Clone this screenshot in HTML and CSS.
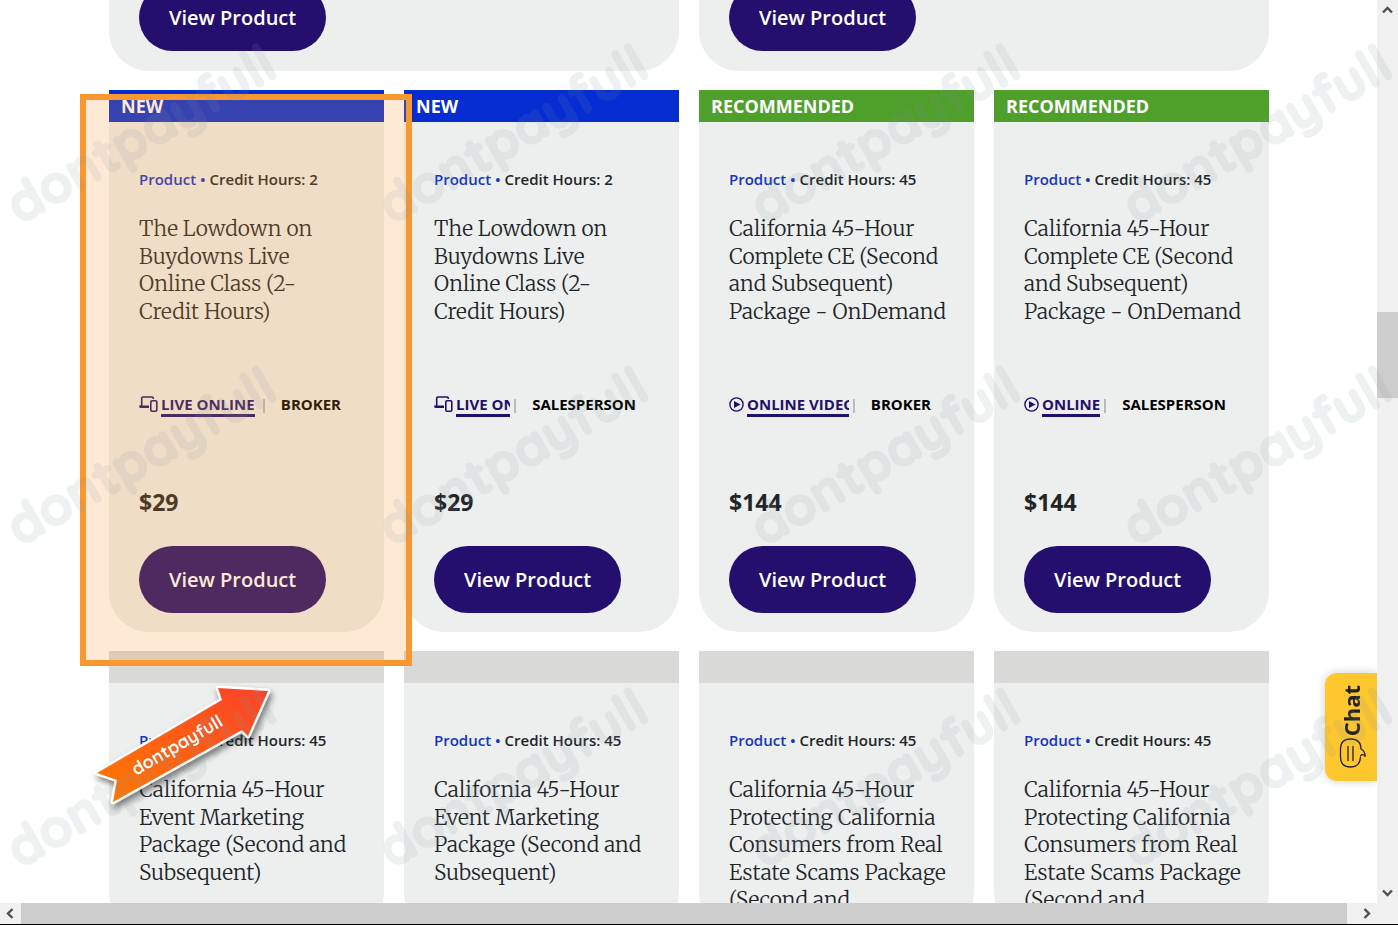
FILE: index.html
```html
<!DOCTYPE html>
<html lang="en">
<head>
    <meta charset="UTF-8">
    <meta name="viewport" content="width=device-width, initial-scale=1.0">
    <title>California Real Estate Courses</title>
    <link rel="stylesheet" href="styles.css">
</head>
<body>

    <!-- shared icons -->
    <svg class="sprite" aria-hidden="true">
        <symbol id="devices" viewBox="0 0 19 17">
            <path d="M2.7 10V2.2q0-1.2 1.2-1.2h9.2q1.2 0 1.2 1.2V3" fill="none" stroke="currentColor" stroke-width="1.6"/>
            <path d="M0 9.5h10v2.5H1.5Q0 12 0 9.5z" fill="currentColor"/>
            <rect x="11.8" y="4.8" width="6" height="10.4" rx="1.2" fill="none" stroke="currentColor" stroke-width="1.6"/>
        </symbol>
        <symbol id="play" viewBox="0 0 16 16">
            <circle cx="7.5" cy="8" r="6.6" fill="none" stroke="currentColor" stroke-width="1.4"/>
            <path d="M5 4.4v7.2L11.6 8z" fill="currentColor"/>
        </symbol>
    </svg>

    <div class="window">
        <main class="page">
            <div class="row row-top">
                <article class="card wide"><a class="btn" href="#">View Product</a></article>
                <article class="card wide"><a class="btn" href="#">View Product</a></article>
            </div>

            <div class="row">
                <article class="card">
                    <div class="flag new">NEW</div>
                    <div class="body">
                        <p class="meta"><a href="#">Product</a> <i>•</i> Credit Hours: 2</p>
                        <h3>The Lowdown on<br>Buydowns Live<br>Online Class (2-<br>Credit Hours)</h3>
                        <div class="tags">
                            <svg class="icon devices"><use href="#devices"/></svg>
                            <span class="format"><a href="#">LIVE ONLINE</a></span>
                            <span class="bar"></span>
                            <span>BROKER</span>
                        </div>
                        <p class="price">$29</p>
                        <a class="btn" href="#">View Product</a>
                    </div>
                </article>
                <article class="card">
                    <div class="flag new">NEW</div>
                    <div class="body">
                        <p class="meta"><a href="#">Product</a> <i>•</i> Credit Hours: 2</p>
                        <h3>The Lowdown on<br>Buydowns Live<br>Online Class (2-<br>Credit Hours)</h3>
                        <div class="tags">
                            <svg class="icon devices"><use href="#devices"/></svg>
                            <span class="format"><a href="#">LIVE ONLINE</a></span>
                            <span class="bar"></span>
                            <span>SALESPERSON</span>
                        </div>
                        <p class="price">$29</p>
                        <a class="btn" href="#">View Product</a>
                    </div>
                </article>
                <article class="card">
                    <div class="flag recommended">RECOMMENDED</div>
                    <div class="body">
                        <p class="meta"><a href="#">Product</a> <i>•</i> Credit Hours: 45</p>
                        <h3>California 45-Hour<br>Complete CE (Second<br>and Subsequent)<br>Package - OnDemand</h3>
                        <div class="tags">
                            <svg class="icon play"><use href="#play"/></svg>
                            <span class="format"><a href="#">ONLINE VIDEO</a></span>
                            <span class="bar"></span>
                            <span>BROKER</span>
                        </div>
                        <p class="price">$144</p>
                        <a class="btn" href="#">View Product</a>
                    </div>
                </article>
                <article class="card">
                    <div class="flag recommended">RECOMMENDED</div>
                    <div class="body">
                        <p class="meta"><a href="#">Product</a> <i>•</i> Credit Hours: 45</p>
                        <h3>California 45-Hour<br>Complete CE (Second<br>and Subsequent)<br>Package - OnDemand</h3>
                        <div class="tags">
                            <svg class="icon play"><use href="#play"/></svg>
                            <span class="format"><a href="#">ONLINE VIDEO</a></span>
                            <span class="bar"></span>
                            <span>SALESPERSON</span>
                        </div>
                        <p class="price">$144</p>
                        <a class="btn" href="#">View Product</a>
                    </div>
                </article>
            </div>

            <div class="row">
                <article class="card">
                    <div class="flag"></div>
                    <div class="body">
                        <p class="meta"><a href="#">Product</a> <i>•</i> Credit Hours: 45</p>
                        <h3>California 45-Hour<br>Event Marketing<br>Package (Second and<br>Subsequent)</h3>
                    </div>
                </article>
                <article class="card">
                    <div class="flag"></div>
                    <div class="body">
                        <p class="meta"><a href="#">Product</a> <i>•</i> Credit Hours: 45</p>
                        <h3>California 45-Hour<br>Event Marketing<br>Package (Second and<br>Subsequent)</h3>
                    </div>
                </article>
                <article class="card">
                    <div class="flag"></div>
                    <div class="body">
                        <p class="meta"><a href="#">Product</a> <i>•</i> Credit Hours: 45</p>
                        <h3>California 45-Hour<br>Protecting California<br>Consumers from Real<br>Estate Scams Package<br>(Second and</h3>
                    </div>
                </article>
                <article class="card">
                    <div class="flag"></div>
                    <div class="body">
                        <p class="meta"><a href="#">Product</a> <i>•</i> Credit Hours: 45</p>
                        <h3>California 45-Hour<br>Protecting California<br>Consumers from Real<br>Estate Scams Package<br>(Second and</h3>
                    </div>
                </article>
            </div>

            <button class="chat">
                <svg viewBox="0 0 30 32" fill="none" stroke="#222" stroke-width="1.3" stroke-linecap="round">
                    <path d="M24.5 20Q24 30 14.5 30Q4.5 30 4.5 20V12Q4.5 2 14.5 2Q25 2 25 12Q29 14 29 19"/>
                    <path d="M29 19Q27 16.5 24.7 18.5"/>
                    <path d="M12 9.5v14M17 9.5v14"/>
                </svg>
                <span>Chat</span>
            </button>
        </main>

        <div class="scroll-y">
            <svg viewBox="0 0 11 8"><path d="M1 6.5L5.5 2L10 6.5"/></svg>
            <div class="thumb"></div>
            <svg viewBox="0 0 11 8"><path d="M1 1.5L5.5 6L10 1.5"/></svg>
        </div>
    </div>

    <div class="scroll-x">
        <svg viewBox="0 0 8 11"><path d="M6.5 1L2 5.5L6.5 10"/></svg>
        <div class="thumb"></div>
        <svg viewBox="0 0 8 11"><path d="M1.5 1L6 5.5L1.5 10"/></svg>
    </div>

    <div class="highlight"></div>

    <svg class="arrow" viewBox="0 0 200 140">
        <defs>
            <linearGradient id="fire" x1="0" y1="1" x2="1" y2="0">
                <stop offset="0" stop-color="#ff7a00"/>
                <stop offset="1" stop-color="#fb4128"/>
            </linearGradient>
        </defs>
        <path d="M17 103L142 30L138 18L188 21L168 66L162 60L33 132L37 110Z" fill="url(#fire)" stroke="#fff" stroke-width="5" stroke-linejoin="round" paint-order="stroke"/>
        <text x="56" y="106" transform="rotate(-30 56 106)">dontpayfull</text>
    </svg>

    <div class="watermark" aria-hidden="true">
        <span>dontpayfull</span><span>dontpayfull</span><span>dontpayfull</span><span>dontpayfull</span>
        <span>dontpayfull</span><span>dontpayfull</span><span>dontpayfull</span><span>dontpayfull</span>
        <span>dontpayfull</span><span>dontpayfull</span><span>dontpayfull</span><span>dontpayfull</span>
    </div>

</body>
</html>
```
FILE: styles.css
```css
* { box-sizing: border-box; }
body {
    margin: 0;
    height: 100vh;
    display: flex;
    flex-direction: column;
    overflow: hidden;
    position: relative;
    background: #fff;
    color: #212529;
    font-family: "Open Sans", sans-serif;
    border-bottom: 1px solid #000;
}
a { text-decoration: none; }
p, h3 { margin: 0; }
.sprite {
    position: absolute;
    width: 0;
    height: 0;
}
.window {
    flex: 1;
    min-height: 0;
    display: flex;
}
.page {
    flex: 1;
    position: relative;
    overflow: hidden;
    padding: 0 108px 0 109px;
}

/* product cards */
.row {
    display: grid;
    grid-template-columns: repeat(4, minmax(0, 1fr));
    gap: 20px;
    margin-bottom: 19px;
}
.row-top {
    height: 71px;
    align-content: end;
    overflow: hidden;
}
.card {
    background: #edefee;
    border-radius: 0 0 40px 40px;
}
.wide {
    grid-column: span 2;
    padding: 30px 30px 20px;
}
.flag {
    height: 32px;
    padding-left: 12px;
    background: #d9d9d8;
    color: #fff;
    font-size: 18px;
    font-weight: 700;
    line-height: 32px;
}
.new { background: #052dd2; }
.recommended { background: #4f9f2b; }
.body { padding: 45px 30px 19px; }
.meta {
    font-size: 15px;
    font-weight: 600;
    line-height: 24px;
}
.meta a, .meta i {
    color: #1434c4;
    font-style: normal;
}
h3 {
    margin-top: 24px;
    min-height: 138px;
    font-family: Merriweather, "Liberation Serif", serif;
    font-size: 21px;
    font-weight: 300;
    line-height: 1.315;
    white-space: nowrap;
}
.tags {
    display: flex;
    align-items: flex-start;
    height: 24px;
    margin: 41px 13px 0 0;
    color: #000;
    font-size: 15px;
    font-weight: 700;
    line-height: 20px;
}
.icon {
    flex: none;
    height: 21px;
    margin-right: 3px;
    color: #240f6e;
}
.devices { width: 19px; }
.play {
    width: 16px;
    margin-right: 2px;
}
.format {
    flex: 1;
    min-width: 0;
    overflow: hidden;
    white-space: nowrap;
}
.format a {
    display: inline-block;
    border-bottom: 3px solid #240f6e;
    color: #240f6e;
    vertical-align: top;
}
.bar {
    width: 2px;
    height: 14px;
    margin: 5px 16px 0 4px;
    background: #bbb;
}
.price {
    margin-top: 66px;
    font-size: 23px;
    font-weight: 700;
    line-height: 36px;
}
.btn {
    display: inline-block;
    padding: 0 30px;
    border-radius: 34px;
    background: #240f6e;
    color: #fff;
    font-size: 20px;
    font-weight: 600;
    line-height: 67px;
    vertical-align: top;
    white-space: nowrap;
}
.body .btn { margin-top: 26px; }

/* chat tab */
.chat {
    position: absolute;
    right: 0;
    bottom: 122px;
    width: 52px;
    height: 108px;
    display: flex;
    flex-direction: column-reverse;
    align-items: center;
    justify-content: center;
    padding: 0;
    border: none;
    border-radius: 12px 0 0 12px;
    background: #ffc72e;
    box-shadow: 0 0 10px rgba(0, 0, 0, 0.2);
    color: #222;
    font: 700 22px/28px "Open Sans", sans-serif;
}
.chat svg {
    width: 30px;
    height: 32px;
}
.chat span {
    writing-mode: vertical-rl;
    transform: rotate(180deg);
}

/* scrollbars */
.scroll-y, .scroll-x {
    display: flex;
    align-items: center;
    justify-content: space-between;
    background: #f0f0f0;
}
.scroll-y {
    flex-direction: column;
    width: 21px;
    padding: 6px 0;
}
.scroll-x {
    height: 21px;
    padding: 0 27px 0 6px;
}
.scroll-y svg {
    width: 11px;
    height: 8px;
}
.scroll-x svg {
    width: 8px;
    height: 11px;
}
.scroll-y path, .scroll-x path {
    fill: none;
    stroke: #505050;
    stroke-width: 2.4;
}
.thumb { background: #cdcdcd; }
.scroll-y .thumb {
    width: 100%;
    height: 86px;
    margin: 298px 0 auto;
}
.scroll-x .thumb {
    flex: 1;
    height: 100%;
    margin: 0 16px 0 7px;
}

/* overlays */
.highlight {
    position: absolute;
    left: 80px;
    top: 94px;
    width: 332px;
    height: 572px;
    border: 6px solid #f99830;
    background: rgba(251, 150, 38, 0.2);
    background-clip: padding-box;
}
.arrow {
    position: absolute;
    left: 80px;
    top: 670px;
    width: 200px;
    height: 140px;
    filter: drop-shadow(2px 4px 3px rgba(0, 0, 0, 0.5));
}
.arrow text {
    fill: #fff;
    font-family: Quicksand, Lato, sans-serif;
    font-size: 18px;
    font-weight: 700;
}
.watermark {
    position: absolute;
    left: -46px;
    top: -28px;
    display: grid;
    grid-template-columns: repeat(4, 372px);
    grid-auto-rows: 322px;
    place-items: center;
    color: #8496a2;
    font-family: Quicksand, Lato, sans-serif;
    font-size: 53px;
    font-weight: 700;
    pointer-events: none;
}
.watermark span {
    opacity: 0.13;
    transform: rotate(-30deg);
    -webkit-text-stroke: 2px #8496a2;
    stroke-linejoin: round;
}
```
